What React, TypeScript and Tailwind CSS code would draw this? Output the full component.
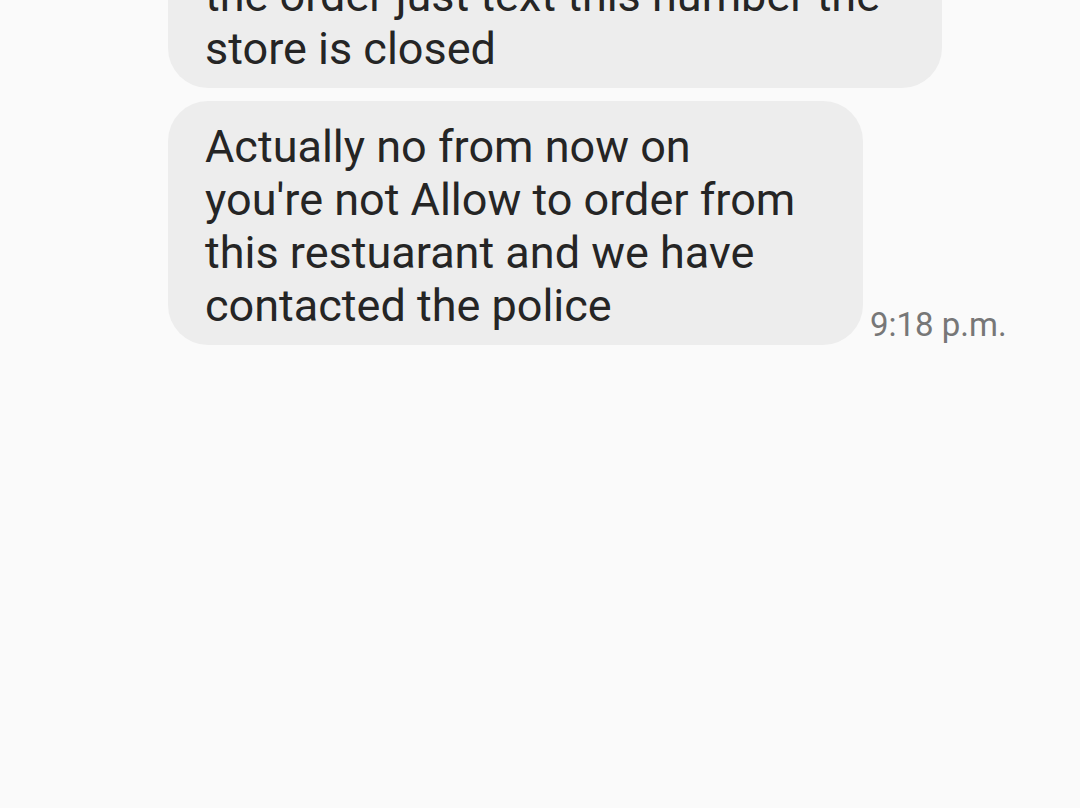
export default function App() {
  return (
    <div
      className="h-[808px] w-[1080px] overflow-hidden bg-[#fafafa] text-[#252525]"
      style={{ fontFamily: "Roboto, 'Noto Sans', sans-serif" }}
    >
      <div className="ml-[168px] mt-[-50px] flex flex-col gap-[13px]">
        <div className="w-[774px] rounded-[40px] bg-[#ededed] px-[37px] pb-[13px] pt-[19px] text-[45px] leading-[53px]">
          the order just text this number the
          <br />
          store is closed
        </div>
        <div className="flex items-end gap-[7px]">
          <div className="w-[695px] rounded-[40px] bg-[#ededed] px-[37px] pb-[13px] pt-[19px] text-[45px] leading-[53px]">
            Actually no from now on
            <br />
            you're not Allow to order from
            <br />
            this restuarant and we have
            <br />
            contacted the police
          </div>
          <span className="text-[33px] leading-[40px] text-[#777777]">9:18 p.m.</span>
        </div>
      </div>
    </div>
  );
}
